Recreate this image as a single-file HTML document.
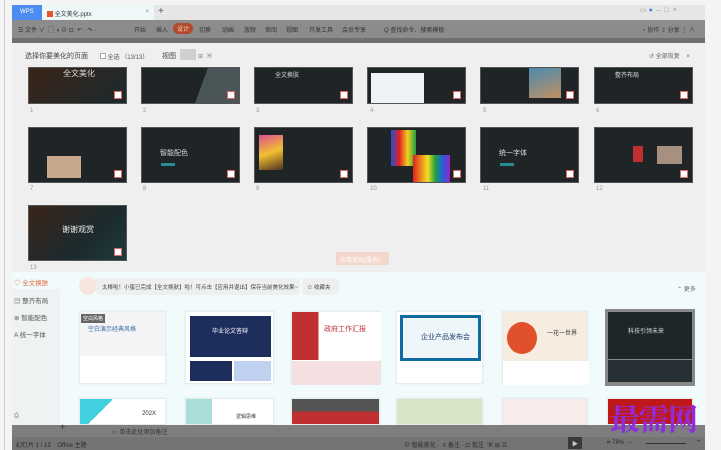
<!DOCTYPE html><html><head><meta charset="utf-8"><style>
*{margin:0;padding:0;box-sizing:border-box}
body{width:721px;height:450px;overflow:hidden;background:#f4f4f4;font-family:"Liberation Sans","Noto Sans CJK SC",sans-serif;font-size:7px;color:#555;position:relative}
.a{position:absolute}
.sl{position:absolute;background:#1f2426;border:1px solid #555}
.sl .ck{position:absolute;right:4px;bottom:4px;width:8px;height:8px;background:#fff;border:1px solid #d66}
.n{position:absolute;font-size:6px;color:#999}
.tp{position:absolute;background:#fff;border:1px solid #e4ecec;box-shadow:0 0 2px #e0eaea}
</style></head><body>
<div class="a" style="left:4px;top:0;width:1px;height:450px;background:#ccc"></div>
<div class="a" style="left:12px;top:5px;width:693px;height:15px;background:#e6e6e6"></div>
<div class="a" style="left:12px;top:5px;width:30px;height:15px;background:#4d8cf0;color:#fff;font-size:6px;padding:4px 8px">WPS</div>
<div class="a" style="left:42px;top:5px;width:112px;height:15px;background:#eef8f8;font-size:6px;padding:4px 5px;color:#333"><span style="display:inline-block;width:6px;height:6px;background:#e5572f;vertical-align:-1px"></span> 全文美化.pptx<span style="position:absolute;right:5px;color:#888">×</span></div>
<div class="a" style="left:158px;top:6px;font-size:10px;color:#555">+</div>
<div class="a" style="left:640px;top:6px;font-size:7px;color:#999">▭ <span style="color:#4a8ad0">●</span> &nbsp;– &nbsp;□ &nbsp;×</div>
<div class="a" style="left:12px;top:20px;width:693px;height:22px;background:#8c8c8c;font-size:6px;color:#333">
<span class="a" style="left:6px;top:5px">☰ 文件 ∨ &nbsp;▢ ◑ ⊖ ⊡ &nbsp;↶ · ↷ ·</span>
<span class="a" style="left:122px;top:5px">开始</span><span class="a" style="left:144px;top:5px">插入</span>
<span class="a" style="left:161px;top:3px;background:#b04a2a;color:#f0d0c0;border-radius:6px;padding:1px 4px">设计</span>
<span class="a" style="left:187px;top:5px">切换</span><span class="a" style="left:210px;top:5px">动画</span><span class="a" style="left:232px;top:5px">放映</span><span class="a" style="left:253px;top:5px">审阅</span><span class="a" style="left:274px;top:5px">视图</span><span class="a" style="left:297px;top:5px">开发工具</span><span class="a" style="left:330px;top:5px">会员专享</span><span class="a" style="left:372px;top:5px">Q 查找命令、搜索模板</span><span class="a" style="left:630px;top:5px">◔ 协作 ⇪ 分享 ⋮ ∧</span></div>
<div class="a" style="left:12px;top:38px;width:693px;height:5px;background:#6f6f6f"></div>
<div class="a" style="left:12px;top:43px;width:693px;height:229px;background:#efefef"></div>
<div class="a" style="left:25px;top:51px;font-size:7px;color:#444">选择你要美化的页面</div>
<div class="a" style="left:100px;top:52px;font-size:6px;color:#555"><span style="display:inline-block;width:6px;height:6px;border:1px solid #aaa;background:#fff"></span> 全选 （13/13）</div>
<div class="a" style="left:162px;top:51px;font-size:7px;color:#444">视图</div>
<div class="a" style="left:180px;top:49px;width:16px;height:11px;background:#cfcfcf"></div>
<div class="a" style="left:198px;top:51px;font-size:6px;color:#888">⊞ &nbsp;▣</div>
<div class="a" style="left:649px;top:51px;font-size:6px;color:#666">↺ 全部恢复 &nbsp;&nbsp;&nbsp;×</div>
<!-- slides row1 -->
<div class="sl" style="left:28px;top:67px;width:99px;height:37px;background:linear-gradient(135deg,#3a2418,#1c2a2e)"><div class="ck"></div><span class="a" style="left:34px;top:0;color:#ddd;font-size:8px">全文美化</span></div>
<div class="sl" style="left:141px;top:67px;width:99px;height:37px;background:linear-gradient(110deg,#1f2426 60%,#4a5558 60%)"><div class="ck"></div></div>
<div class="sl" style="left:254px;top:67px;width:99px;height:37px"><div class="ck"></div><span class="a" style="left:20px;top:2px;color:#ddd;font-size:6px">全文换肤</span></div>
<div class="sl" style="left:367px;top:67px;width:99px;height:37px"><div class="a" style="left:3px;top:5px;width:53px;height:30px;background:#eef2f4"></div><div class="ck"></div></div>
<div class="sl" style="left:480px;top:67px;width:99px;height:37px"><div class="a" style="left:48px;top:0;width:32px;height:30px;background:linear-gradient(160deg,#4a8ab0,#c09060)"></div><div class="ck"></div></div>
<div class="sl" style="left:594px;top:67px;width:99px;height:37px"><div class="ck"></div><span class="a" style="left:20px;top:2px;color:#ddd;font-size:6px">整齐布局</span></div>
<div class="n" style="left:30px;top:108px">1</div><div class="n" style="left:143px;top:108px">2</div><div class="n" style="left:256px;top:108px">3</div><div class="n" style="left:370px;top:108px">4</div><div class="n" style="left:483px;top:108px">5</div><div class="n" style="left:596px;top:108px">6</div>
<!-- row2 -->
<div class="sl" style="left:28px;top:127px;width:99px;height:56px"><div class="a" style="left:18px;top:28px;width:34px;height:22px;background:#c8a88a"></div><div class="ck"></div></div>
<div class="sl" style="left:141px;top:127px;width:99px;height:56px"><span class="a" style="left:18px;top:20px;color:#ddd;font-size:7px">智能配色</span><div class="a" style="left:19px;top:35px;width:14px;height:3px;background:#2a8a94"></div><div class="ck"></div></div>
<div class="sl" style="left:254px;top:127px;width:99px;height:56px"><div class="a" style="left:4px;top:7px;width:24px;height:35px;background:linear-gradient(160deg,#e05090,#f0c030,#503020)"></div><div class="ck"></div></div>
<div class="sl" style="left:367px;top:127px;width:99px;height:56px"><div class="a" style="left:23px;top:2px;width:25px;height:36px;background:linear-gradient(90deg,#2050d0,#e02020,#f0d020,#20a040)"></div><div class="a" style="left:45px;top:27px;width:37px;height:27px;background:linear-gradient(90deg,#e02020,#f08020,#f0e020,#20a040,#2060e0,#a020c0)"></div><div class="ck"></div></div>
<div class="sl" style="left:480px;top:127px;width:99px;height:56px"><span class="a" style="left:18px;top:20px;color:#ddd;font-size:7px">统一字体</span><div class="a" style="left:19px;top:35px;width:14px;height:3px;background:#2a8a94"></div><div class="ck"></div></div>
<div class="sl" style="left:594px;top:127px;width:99px;height:56px"><div class="a" style="left:38px;top:18px;width:10px;height:16px;background:#c03030"></div><div class="a" style="left:62px;top:18px;width:25px;height:18px;background:#a89080"></div><div class="ck"></div></div>
<div class="n" style="left:30px;top:186px">7</div><div class="n" style="left:143px;top:186px">8</div><div class="n" style="left:256px;top:186px">9</div><div class="n" style="left:370px;top:186px">10</div><div class="n" style="left:483px;top:186px">11</div><div class="n" style="left:596px;top:186px">12</div>
<div class="sl" style="left:28px;top:205px;width:99px;height:56px;background:linear-gradient(135deg,#3a2418,#1c2a2e 60%,#1f3a3a)"><span class="a" style="left:33px;top:18px;color:#eee;font-size:8px">谢谢观赏</span><div class="ck"></div></div>
<div class="n" style="left:30px;top:265px">13</div>
<div class="a" style="left:336px;top:252px;width:53px;height:13px;background:#f3d6cc;color:#fff;font-size:6px;padding:3px 4px">应用美化(服务)</div>
<!-- bottom panel -->
<div class="a" style="left:12px;top:272px;width:693px;height:153px;background:#f2fbfb"></div>
<div class="a" style="left:12px;top:272px;width:48px;height:153px;background:#eef2f2"></div>
<div class="a" style="left:12px;top:272px;width:48px;height:17px;background:#f2fbfb"></div>
<div class="a" style="left:14px;top:277px;font-size:6.5px;color:#e0663a">♡ 全文换肤</div>
<div class="a" style="left:14px;top:295px;font-size:6.5px;color:#555">▤ 整齐布局</div>
<div class="a" style="left:14px;top:312px;font-size:6.5px;color:#555">⊛ 智能配色</div>
<div class="a" style="left:14px;top:329px;font-size:6.5px;color:#555">A 统一字体</div>
<div class="a" style="left:14px;top:413px;font-size:6px;color:#777">⎙</div>
<div class="a" style="left:79px;top:277px;width:18px;height:18px;border-radius:50%;background:#f6e6de"></div>
<div class="a" style="left:96px;top:278px;width:204px;height:17px;background:#eef0f0;border-radius:4px;font-size:5.5px;color:#444;padding:5px 6px;white-space:nowrap">太棒啦！小蜜已完成【全文换肤】啦！可点击【应用并退出】保存当前美化效果~</div>
<div class="a" style="left:302px;top:278px;width:37px;height:17px;background:#eef0f0;border-radius:4px;font-size:5.5px;color:#444;padding:5px 5px">☆ 收藏夹</div>
<div class="a" style="left:677px;top:284px;font-size:6px;color:#666">⌃ 更多</div>
<div class="tp" style="left:79px;top:311px;width:87px;height:73px;background:linear-gradient(#f4f4f6 62%,#fff 62%)"><div class="a" style="left:1px;top:2px;background:#666;color:#fff;font-size:5px;padding:1px 2px">空白风格</div><span class="a" style="left:8px;top:12px;color:#3a6aa0;font-size:6px">空白演示经典风格</span></div>
<div class="tp" style="left:185px;top:311px;width:89px;height:73px"><div class="a" style="left:4px;top:4px;width:81px;height:41px;background:#1d2d5c"></div><span class="a" style="left:26px;top:14px;color:#fff;font-size:6px">毕业论文答辩</span><div class="a" style="left:4px;top:49px;width:42px;height:20px;background:#1d2d5c"></div><div class="a" style="left:48px;top:49px;width:37px;height:20px;background:#c0d0f0"></div></div>
<div class="tp" style="left:291px;top:311px;width:89px;height:73px"><div class="a" style="left:0;top:0;width:89px;height:48px;background:linear-gradient(90deg,#c03030 30%,#fff 30%)"></div><span class="a" style="left:32px;top:12px;color:#c03030;font-size:7px">政府工作汇报</span><div class="a" style="left:0;top:49px;width:89px;height:24px;background:#f4e0e0"></div></div>
<div class="tp" style="left:396px;top:311px;width:87px;height:73px"><div class="a" style="left:3px;top:3px;width:81px;height:46px;background:#eef6fa;border:3px solid #0f6aa0"></div><span class="a" style="left:24px;top:20px;color:#1a3a6a;font-size:7px">企业产品发布会</span></div>
<div class="tp" style="left:502px;top:311px;width:86px;height:73px;background:#f6ece0"><div class="a" style="left:4px;top:10px;width:30px;height:32px;border-radius:50%;background:#e0502a"></div><span class="a" style="left:44px;top:16px;color:#333;font-size:6px">一花一世界</span><div class="a" style="left:0;top:49px;width:86px;height:24px;background:#fff"></div></div>
<div class="a" style="left:605px;top:309px;width:90px;height:77px;background:#888;padding:3px"><div style="width:84px;height:47px;background:#1e2628;color:#ddd;font-size:6px;padding:14px 0 0 20px">科技引领未来</div><div style="margin-top:1px;width:84px;height:22px;background:#273034"></div></div>
<div class="tp" style="left:79px;top:398px;width:87px;height:27px;background:linear-gradient(135deg,#40d0e0 30%,#fff 30%)"><span class="a" style="left:62px;top:12px;color:#333;font-size:6px">202X</span></div>
<div class="tp" style="left:185px;top:398px;width:89px;height:27px;background:linear-gradient(90deg,#a8ddd8 30%,#fff 30%)"><span class="a" style="left:50px;top:14px;color:#333;font-size:5px">逻辑思维</span></div>
<div class="tp" style="left:291px;top:398px;width:89px;height:27px;background:linear-gradient(#555 50%,#c03030 50%)"></div>
<div class="tp" style="left:396px;top:398px;width:87px;height:27px;background:#d8e4c8"></div>
<div class="tp" style="left:502px;top:398px;width:86px;height:27px;background:#f8ecea"></div>
<div class="tp" style="left:607px;top:398px;width:86px;height:27px;background:#c01818"></div>
<!-- status -->
<div class="a" style="left:12px;top:425px;width:693px;height:12px;background:#7e7e7e;font-size:6px;color:#333"><span class="a" style="left:48px;top:-3px;font-size:9px">+</span><span class="a" style="left:100px;top:2px">▭ 单击此处添加备注</span></div>
<div class="a" style="left:12px;top:437px;width:693px;height:13px;background:#747474;font-size:6px;color:#2a2a2a"><span class="a" style="left:4px;top:3px">幻灯片 1 / 13 &nbsp;&nbsp;&nbsp;Office 主题</span><span class="a" style="left:392px;top:3px">⊖ 智能美化 · &nbsp;≡ 备注 · ⊡ 批注 &nbsp;▣ ⊞ ▥</span><span class="a" style="left:556px;top:0;width:14px;height:12px;background:#3a3a3a;color:#ccc;padding:2px 4px">▶</span><span class="a" style="left:595px;top:3px">⌗ 78% · –</span><span class="a" style="left:634px;top:6px;width:40px;height:1px;background:#333"></span><span class="a" style="left:685px;top:2px">+</span></div>
<div class="a" style="left:610px;top:395px;font-size:30px;font-weight:bold;color:#8e2de0;font-family:'Noto Serif CJK SC',serif;letter-spacing:-1px">最需网</div>
</body></html>
